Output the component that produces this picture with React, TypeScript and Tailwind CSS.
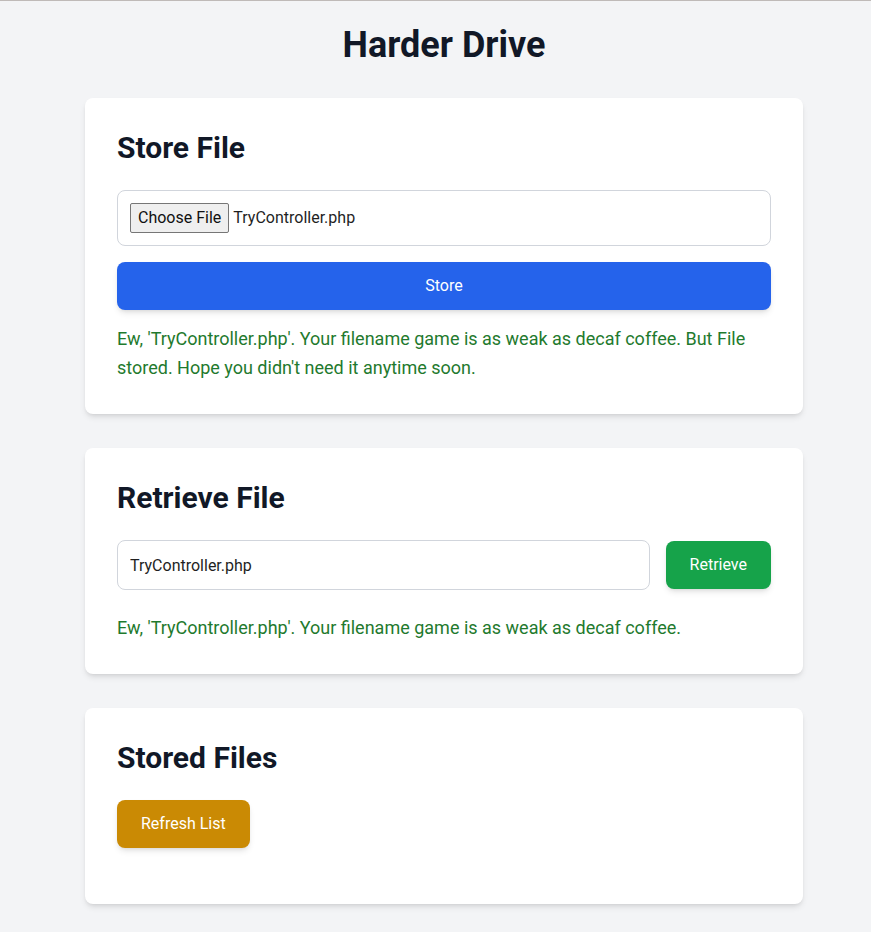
import { useState } from "react";

export default function App() {
  const [fileName] = useState("TryController.php");
  const [retrieveName, setRetrieveName] = useState("TryController.php");

  return (
    <div
      className="min-h-screen bg-[#f3f4f6] border-t border-[#bfbab8] text-[#111827]"
      style={{ fontFamily: "Roboto, 'Noto Sans', sans-serif" }}
    >
      <div className="flex flex-col items-center pl-[17px] pt-[24px] pb-10">
        <h1 className="text-[36px] leading-[40px] font-bold mb-[33px]">Harder Drive</h1>

        <div className="w-[718px] flex flex-col gap-[34px]">
          {/* store */}
          <section className="bg-white rounded-lg shadow-md p-8">
            <h2 className="text-[30px] leading-[36px] font-bold mb-6">Store File</h2>
            <div className="h-[56px] flex items-center border border-gray-300 rounded-lg px-3 text-base">
              <span className="h-[30px] px-[7px] flex items-center bg-[#efefef] border border-[#767676] rounded-[2px] text-[#111] mr-[4px]">
                Choose File
              </span>
              <span className="text-[#1f1f1f]">{fileName}</span>
            </div>
            <button className="mt-4 w-full h-12 bg-[#2563eb] text-white font-normal rounded-lg shadow-md">
              Store
            </button>
            <p className="mt-[14px] text-[18px] leading-[29px] text-[#1f7a2e]">
              Ew, 'TryController.php'. Your filename game is as weak as decaf coffee. But File
              stored. Hope you didn't need it anytime soon.
            </p>
          </section>

          {/* retrieve */}
          <section className="bg-white rounded-lg shadow-md p-8">
            <h2 className="text-[30px] leading-[36px] font-bold mb-6">Retrieve File</h2>
            <div className="flex items-center gap-4">
              <input
                value={retrieveName}
                onChange={(e) => setRetrieveName(e.target.value)}
                className="flex-1 h-[50px] border border-gray-300 rounded-lg px-3 text-base text-[#1f1f1f] outline-none"
              />
              <button className="h-12 px-6 bg-[#16a34a] text-white font-normal rounded-lg shadow-md">
                Retrieve
              </button>
            </div>
            <p className="mt-[23px] text-[18px] leading-[29px] text-[#1f7a2e]">
              Ew, 'TryController.php'. Your filename game is as weak as decaf coffee.
            </p>
          </section>

          {/* list */}
          <section className="bg-white rounded-lg shadow-md p-8">
            <h2 className="text-[30px] leading-[36px] font-bold mb-6">Stored Files</h2>
            <button className="h-12 px-6 bg-[#ca8a04] text-white font-normal rounded-lg shadow-md">
              Refresh List
            </button>
            <ul className="mt-6"></ul>
          </section>
        </div>
      </div>
    </div>
  );
}
